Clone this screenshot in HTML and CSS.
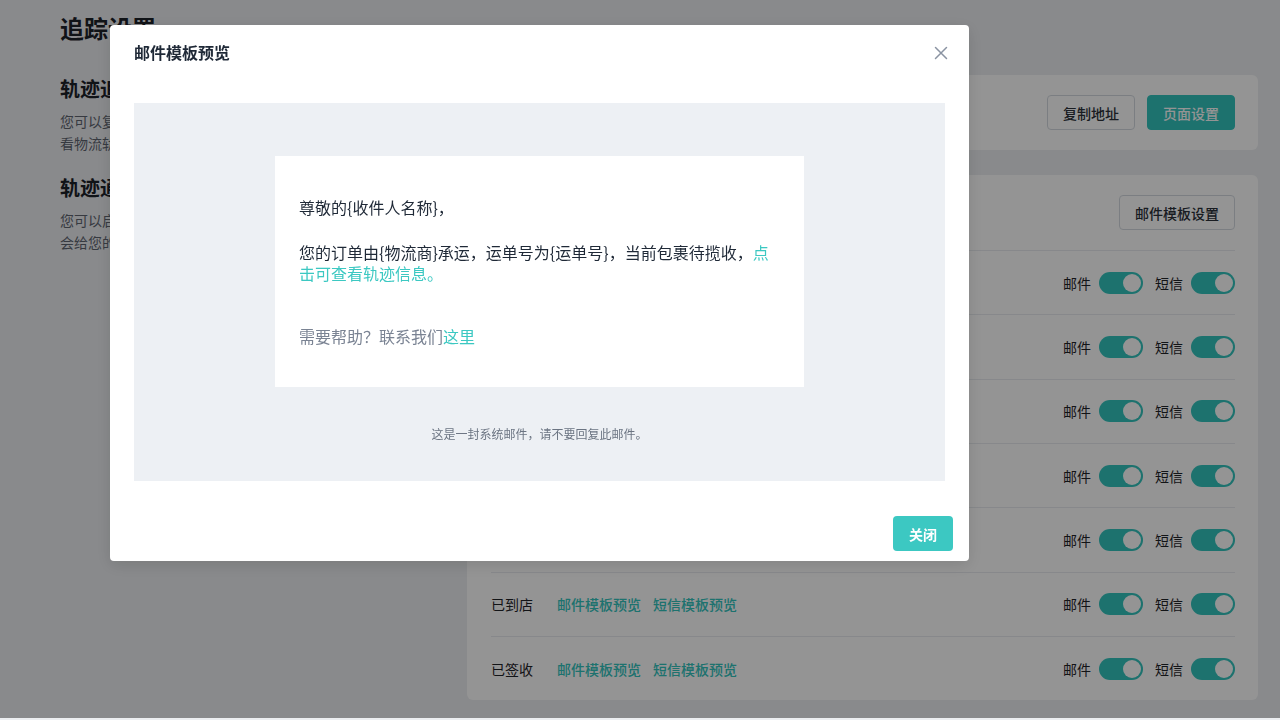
FILE: index.html
```html
<!DOCTYPE html>
<html lang="zh-CN">
<head>
<meta charset="utf-8">
<title>追踪设置</title>
<link rel="stylesheet" href="styles.css">
</head>
<body>
<div class="page">
  <h1 class="page-title">追踪设置</h1>
  <div class="cols">
    <div class="left">
      <h2 class="sec-title">轨迹追踪页面</h2>
      <p class="sec-desc">您可以复制链接地址并发送给您的客户，客户打开链接即可查看物流轨迹信息。</p>
      <h2 class="sec-title second">轨迹通知设置</h2>
      <p class="sec-desc">您可以启用邮件和短信通知，当包裹物流状态发生变化时系统会给您的客户发送通知。</p>
    </div>
    <div class="right">
      <div class="card card-top">
        <span class="card-label">追踪页地址</span>
        <div class="btns">
          <button class="btn btn-default">复制地址</button>
          <button class="btn btn-primary">页面设置</button>
        </div>
      </div>
      <div class="card card-list">
        <div class="list-head">
          <span class="card-label">通知状态</span>
          <button class="btn btn-default">邮件模板设置</button>
        </div>
        <div class="row">
          <span class="row-label">待揽收</span>
          <a class="link">邮件模板预览</a><a class="link">短信模板预览</a>
          <div class="switches"><span class="sw-label">邮件</span><span class="toggle"></span><span class="sw-label">短信</span><span class="toggle"></span></div>
        </div>
        <div class="row">
          <span class="row-label">运输中</span>
          <a class="link">邮件模板预览</a><a class="link">短信模板预览</a>
          <div class="switches"><span class="sw-label">邮件</span><span class="toggle"></span><span class="sw-label">短信</span><span class="toggle"></span></div>
        </div>
        <div class="row">
          <span class="row-label">派送中</span>
          <a class="link">邮件模板预览</a><a class="link">短信模板预览</a>
          <div class="switches"><span class="sw-label">邮件</span><span class="toggle"></span><span class="sw-label">短信</span><span class="toggle"></span></div>
        </div>
        <div class="row">
          <span class="row-label">投递失败</span>
          <a class="link">邮件模板预览</a><a class="link">短信模板预览</a>
          <div class="switches"><span class="sw-label">邮件</span><span class="toggle"></span><span class="sw-label">短信</span><span class="toggle"></span></div>
        </div>
        <div class="row">
          <span class="row-label">异常</span>
          <a class="link">邮件模板预览</a><a class="link">短信模板预览</a>
          <div class="switches"><span class="sw-label">邮件</span><span class="toggle"></span><span class="sw-label">短信</span><span class="toggle"></span></div>
        </div>
        <div class="row">
          <span class="row-label">已到店</span>
          <a class="link">邮件模板预览</a><a class="link">短信模板预览</a>
          <div class="switches"><span class="sw-label">邮件</span><span class="toggle"></span><span class="sw-label">短信</span><span class="toggle"></span></div>
        </div>
        <div class="row">
          <span class="row-label">已签收</span>
          <a class="link">邮件模板预览</a><a class="link">短信模板预览</a>
          <div class="switches"><span class="sw-label">邮件</span><span class="toggle"></span><span class="sw-label">短信</span><span class="toggle"></span></div>
        </div>
      </div>
    </div>
  </div>
</div>

<div class="overlay"></div>

<div class="modal">
  <div class="modal-head">
    <span class="modal-title">邮件模板预览</span>
    <svg class="modal-close" width="14" height="14" viewBox="0 0 14 14"><path d="M1.5 1.5 L12.5 12.5 M12.5 1.5 L1.5 12.5" stroke="#8a93a2" stroke-width="1.5" stroke-linecap="round" fill="none"/></svg>
  </div>
  <div class="preview">
    <div class="mail">
      <p class="mail-greet">尊敬的{收件人名称}，</p>
      <p class="mail-text">您的订单由{物流商}承运，运单号为{运单号}，当前包裹待揽收，<a class="mail-link">点击可查看轨迹信息。</a></p>
      <p class="mail-help">需要帮助？联系我们<a class="mail-link">这里</a></p>
    </div>
    <p class="mail-foot">这是一封系统邮件，请不要回复此邮件。</p>
  </div>
  <div class="modal-foot">
    <button class="btn-close">关闭</button>
  </div>
</div>
</body>
</html>
```

FILE: styles.css
```css
* { box-sizing: border-box; }
html, body { margin: 0; padding: 0; }
body {
  width: 1280px;
  height: 720px;
  overflow: hidden;
  background: #eceef1;
  font-family: "Noto Sans CJK SC", "Noto Sans", sans-serif;
  color: #1f2329;
}
p { margin: 0; }
h1, h2 { margin: 0; }

.page { padding: 14px 22px 0 60px; }
.page-title { font-size: 24px; line-height: 28px; font-weight: 700; color: #1d2129; margin-bottom: 33px; }

.cols { display: flex; gap: 27px; }
.left { width: 380px; flex: none; }
.sec-title { font-size: 20px; line-height: 28px; font-weight: 700; color: #1d2129; }
.sec-title.second { margin-top: 20px; }
.sec-desc { margin-top: 7px; font-size: 14px; line-height: 22px; color: #5f6570; }

.right { flex: 1; display: flex; flex-direction: column; gap: 25px; }
.card { background: #fff; border-radius: 6px; }
.card-top { height: 75px; padding: 0 23px 0 24px; display: flex; align-items: center; justify-content: space-between; }
.card-label { font-size: 14px; color: #1f2329; }
.btns { display: flex; gap: 12px; }
.btn {
  height: 35px; padding: 0 15px; border-radius: 4px; font-family: inherit;
  font-size: 14px; font-weight: 500; cursor: pointer;
}
.btn-default { background: #fff; border: 1px solid #d5dae1; color: #2b313a; }
.btn-primary { background: #33c4be; border: 1px solid #33c4be; color: #fff; }

.card-list { padding: 0 23px 0 24px; }
.list-head { height: 75px; display: flex; align-items: center; justify-content: space-between; }
.row { height: 64.33px; border-top: 1px solid #e8ebef; display: flex; align-items: center; font-size: 14px; }
.row-label { width: 66px; color: #1f2329; }
.link { color: #33c4be; font-weight: 500; margin-right: 12px; }
.switches { margin-left: auto; display: flex; align-items: center; }
.sw-label { color: #1f2329; margin-right: 8px; }
.toggle {
  width: 44px; height: 22px; border-radius: 11px; background: #33c4be; position: relative; margin-right: 12px;
}
.toggle:last-child { margin-right: 0; }
.toggle::after {
  content: ""; position: absolute; right: 2px; top: 2px; width: 18px; height: 18px; border-radius: 50%; background: #fff;
}

.overlay { position: fixed; left: 0; top: 0; right: 0; bottom: 2px; background: rgba(0, 0, 0, 0.42); }

.modal {
  position: fixed; left: 110px; top: 25px; width: 859px; height: 536px;
  background: #fff; border-radius: 4px; box-shadow: 0 4px 16px rgba(0,0,0,0.12);
}
.modal-head { position: relative; padding: 15px 24px 39px; height: 78px; }
.modal-title { font-size: 16px; line-height: 24px; font-weight: 700; color: #1f2937; }
.modal-close { position: absolute; right: 21px; top: 21px; }

.preview { margin: 0 24px; height: 378px; background: #edf0f4; padding-top: 53px; }
.mail { width: 529px; height: 231px; margin: 0 auto; background: #fff; padding: 40px 24px; font-size: 16px; line-height: 22px; color: #1f2937; }
.mail-text { margin-top: 24px; line-height: 21px; }
.mail-help { margin-top: 41px; color: #7a8393; }
.mail-link { color: #3cc8c2; }
.mail-foot { margin-top: 37px; text-align: center; font-size: 12px; line-height: 20px; color: #6b7482; }

.modal-foot { padding: 35px 16px 10px; display: flex; justify-content: flex-end; }
.btn-close {
  width: 60px; height: 35px; border: none; border-radius: 4px; background: #3cc8c2; color: #fff;
  font-family: inherit; font-size: 14px; font-weight: 700; cursor: pointer;
}
```
